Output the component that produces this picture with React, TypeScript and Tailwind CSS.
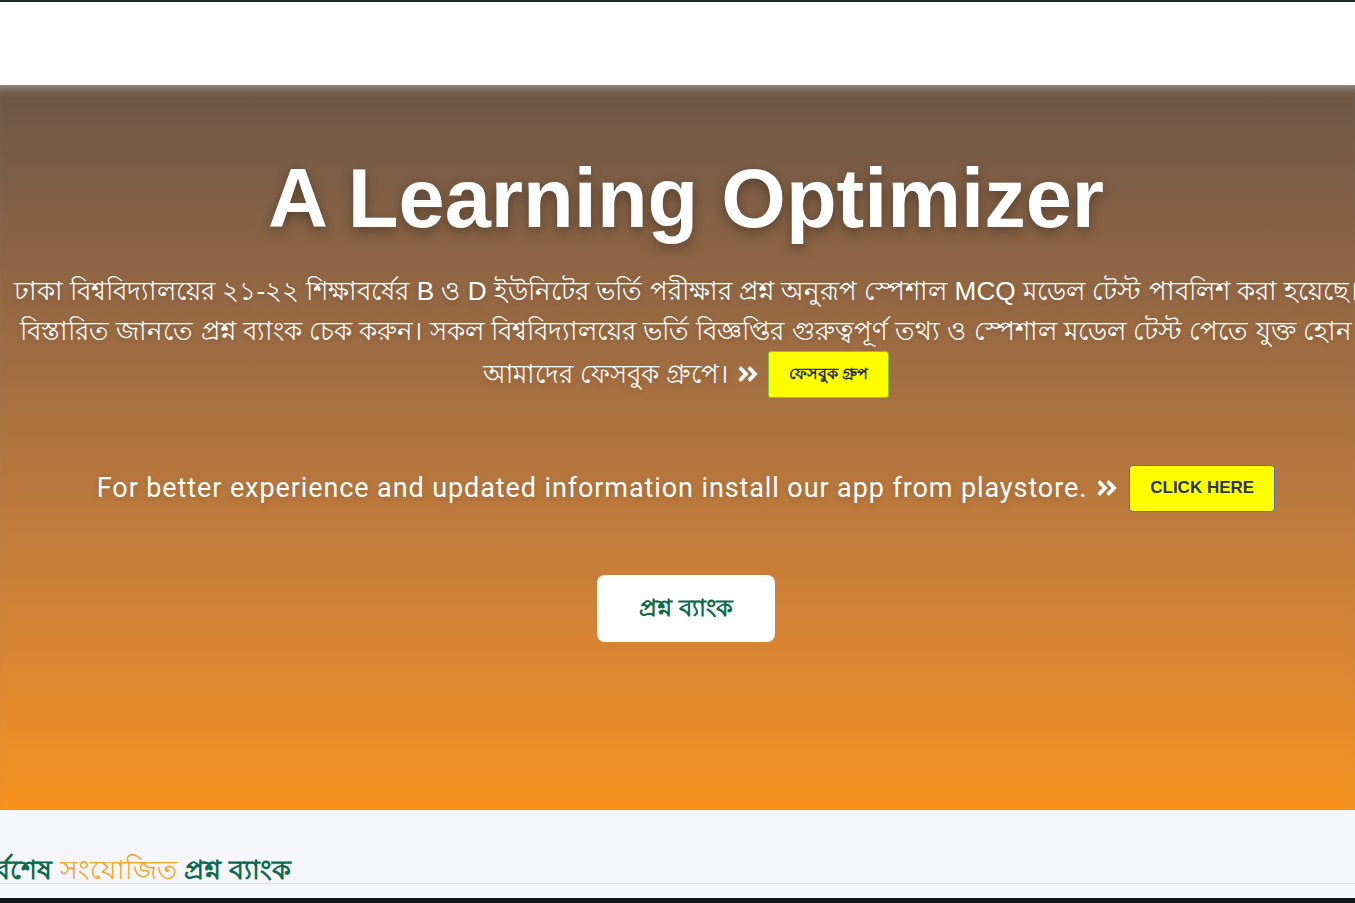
import { FaAngleDoubleRight } from 'react-icons/fa';

export default function App() {
  return (
    <div className="min-h-[903px] w-full overflow-hidden bg-[#f5f6fa] font-['Liberation_Sans',sans-serif]">
      {/* top bar + header */}
      <div className="h-[2px] bg-[#1e262d]" />
      <header className="h-[83px] bg-white" />

      {/* Hero */}
      <section className="relative h-[725px] overflow-hidden bg-gradient-to-b from-[#6d5646] to-[#f8921c] shadow-[inset_0_10px_8px_-6px_rgba(150,150,150,0.9)]">
        <div className="flex flex-col items-center pl-[17px] pt-[64px] text-white">
          <h1 className="text-[83px] font-bold leading-[1.2] [text-shadow:0_4px_12px_rgba(0,0,0,0.35)]">
            A Learning Optimizer
          </h1>

          <div className="mt-[22px] flex w-full flex-col items-center text-[26.2px] leading-[40px] [text-shadow:0_2px_6px_rgba(0,0,0,0.15)]">
            <div className="flex w-full justify-center">
              <p className="shrink-0 whitespace-nowrap">
                ঢাকা বিশ্ববিদ্যালয়ের ২১-২২ শিক্ষাবর্ষের B ও D ইউনিটের ভর্তি পরীক্ষার প্রশ্ন অনুরূপ স্পেশাল MCQ মডেল টেস্ট পাবলিশ করা হয়েছে।
              </p>
            </div>
            <div className="flex w-full justify-center">
              <p className="shrink-0 whitespace-nowrap">
                বিস্তারিত জানতে প্রশ্ন ব্যাংক চেক করুন। সকল বিশ্ববিদ্যালয়ের ভর্তি বিজ্ঞপ্তির গুরুত্বপূর্ণ তথ্য ও স্পেশাল মডেল টেস্ট পেতে যুক্ত হোন
              </p>
            </div>
            <div className="flex items-center justify-center gap-[8px]">
              <span className="whitespace-nowrap">আমাদের ফেসবুক গ্রুপে।</span>
              <FaAngleDoubleRight className="h-[24px] w-[24px]" />
              <button className="h-[47px] w-[121px] rounded-[3px] border border-[#7ac943] bg-[#ffff00] text-[16px] font-bold text-[#1f2a44] [text-shadow:none]">
                ফেসবুক গ্রুপ
              </button>
            </div>
          </div>

          <div className="mt-[67px] flex items-center gap-[8px] font-['Roboto',sans-serif] text-[27px] tracking-[0.9px]">
            <span className="whitespace-nowrap [text-shadow:0_2px_6px_rgba(0,0,0,0.15)]">
              For better experience and updated information install our app from playstore.
            </span>
            <FaAngleDoubleRight className="h-[24px] w-[24px]" />
            <button className="ml-[2px] h-[47px] w-[146px] rounded-[4px] border border-[#4e6cf0] bg-[#ffff00] font-['Liberation_Sans',sans-serif] text-[17px] font-bold tracking-normal text-[#2d3250]">
              CLICK HERE
            </button>
          </div>

          <button className="mt-[63px] h-[67px] w-[178px] rounded-[8px] bg-white text-[24px] font-bold text-[#0b6b4b]">
            প্রশ্ন ব্যাংক
          </button>
        </div>
      </section>

      {/* Latest */}
      <section className="h-[88px] pt-[40px]">
        <div className="border-b border-[#d9dce1]">
          <h2 className="-ml-[23px] whitespace-nowrap pt-[7px] text-[27px] font-bold leading-[26px] text-[#0b6b4b]">
            সর্বশেষ <span className="font-medium text-[#f9a21f]">সংযোজিত</span> প্রশ্ন ব্যাংক
          </h2>
        </div>
      </section>
      <div className="h-[5px] bg-[#121619]" />
    </div>
  );
}
